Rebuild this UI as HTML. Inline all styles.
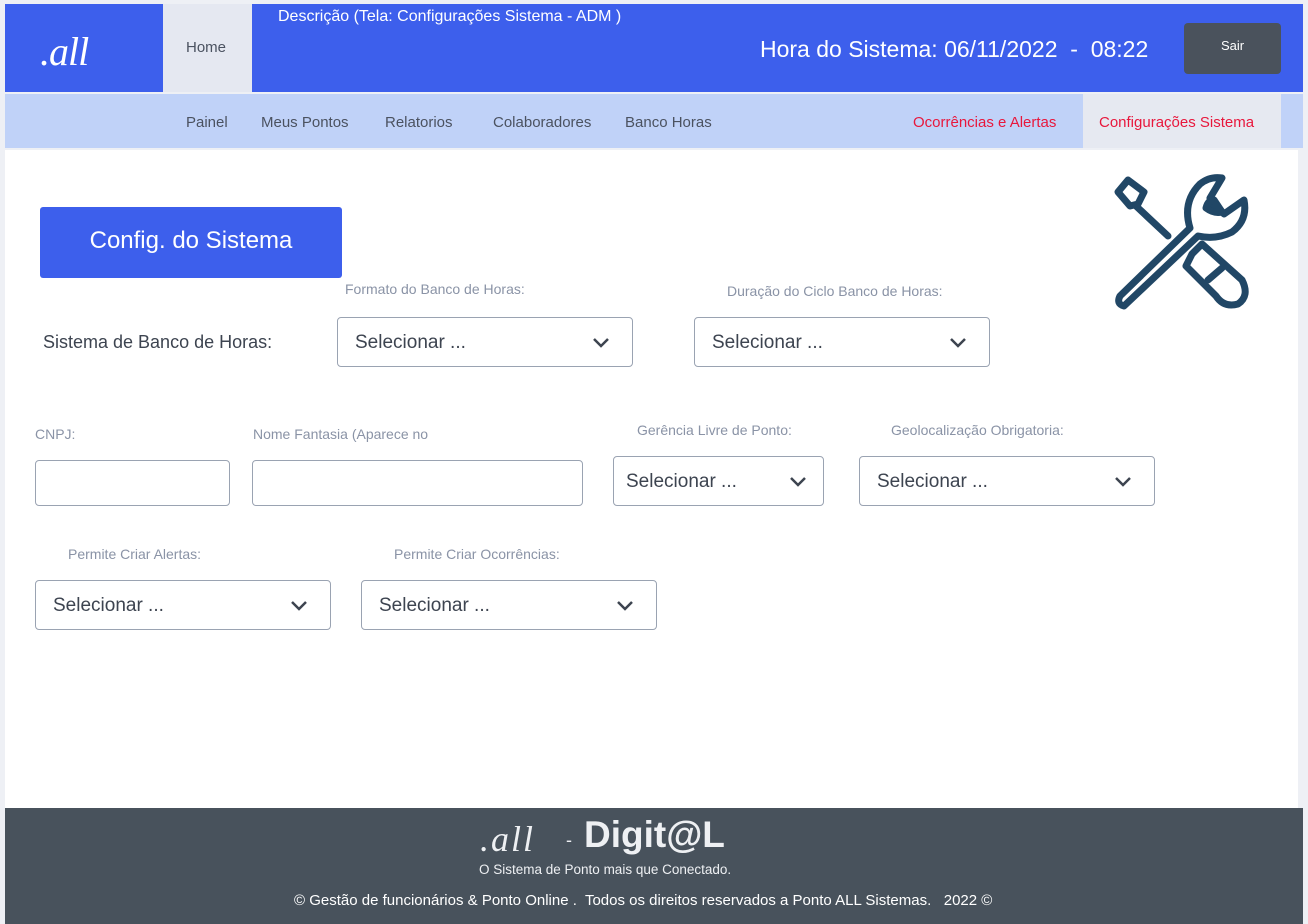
<!DOCTYPE html>
<html><head><meta charset="utf-8"><style>
*{margin:0;padding:0;box-sizing:border-box}
body{width:1308px;height:924px;background:#eef0f5;font-family:"Liberation Sans",sans-serif;position:relative;overflow:hidden}
.a{position:absolute}
.lbl{position:absolute;color:#8a93a6;font-size:14px;white-space:nowrap}
.sel{position:absolute;border:1px solid #9aa3b2;border-radius:4px;background:#fff;height:50px;font-size:19px;color:#3d4450}
.sel span{position:absolute;left:17px;top:14px}
.sel svg{position:absolute;right:22px;top:19px}
.inp{position:absolute;border:1px solid #9aa3b2;border-radius:4px;background:#fff;height:46px}
.nav{position:absolute;top:114px;font-size:15px;color:#4b5260;white-space:nowrap}
</style></head><body>
<div class="a" style="left:5px;top:4px;width:1298px;height:88px;background:#3d5fec"></div>
<div class="a" style="left:40px;top:28px;color:#fff;font-family:'Liberation Serif',serif;font-style:italic;font-size:40px;letter-spacing:-1px">.all</div>
<div class="a" style="left:163px;top:4px;width:89px;height:88px;background:#e5e8f1"></div>
<div class="a" style="left:186px;top:39px;font-size:15px;color:#4b5260">Home</div>
<div class="a" style="left:278px;top:8px;font-size:16px;color:#fff">Descrição (Tela: Configurações Sistema - ADM )</div>
<div class="a" style="left:760px;top:36px;font-size:23px;color:#fff;white-space:nowrap">Hora do Sistema: 06/11/2022&nbsp; - &nbsp;08:22</div>
<div class="a" style="left:1184px;top:23px;width:97px;height:51px;background:#4a525c;border-radius:4px;color:#fff;font-size:13px;text-align:center;line-height:46px">Sair</div>
<div class="a" style="left:5px;top:94px;width:1298px;height:54px;background:#c0d2f8"></div>
<div class="a" style="left:1083px;top:94px;width:198px;height:54px;background:#e6e9f1"></div>
<div class="nav" style="left:186px">Painel</div>
<div class="nav" style="left:261px">Meus Pontos</div>
<div class="nav" style="left:385px">Relatorios</div>
<div class="nav" style="left:493px">Colaboradores</div>
<div class="nav" style="left:625px">Banco Horas</div>
<div class="nav" style="left:913px;color:#e8173c">Ocorrências e Alertas</div>
<div class="nav" style="left:1099px;color:#e8173c">Configurações Sistema</div>
<div class="a" style="left:5px;top:150px;width:1293px;height:658px;background:#fff"></div>
<div class="a" style="left:40px;top:207px;width:302px;height:71px;background:#3d5fec;border-radius:3px;color:#fff;font-size:24px;text-align:center;line-height:68px">Config. do Sistema</div>
<svg class="a" style="left:1110px;top:172px" width="142" height="142" viewBox="0 0 142 142" fill="none" stroke="#214766" stroke-width="7" stroke-linejoin="round" stroke-linecap="round">
<path d="M8 20 L18 8 L34 20 L28 32 L20 34 Z"/>
<path d="M26 34 L58 64"/>
<path d="M80 56 L10 124 Q6 132 14 134 L88 64 Q106 68 122 60 Q138 48 134 28 L114 42 L100 26 L112 6 Q100 4 90 12 Q72 30 80 56 Z"/>
<path d="M96 36 Q98 28 104 28 L112 40 Q104 42 96 36 Z" fill="#214766"/>
<path d="M82 82 L92 72 L132 108 Q140 124 128 132 Q114 136 106 124 L76 94 Z"/>
<path d="M98 108 L112 96"/>
</svg>
<div class="lbl" style="left:345px;top:281px">Formato do Banco de Horas:</div>
<div class="lbl" style="left:727px;top:283px">Duração do Ciclo Banco de Horas:</div>
<div class="a" style="left:43px;top:332px;font-size:18px;color:#3d4450">Sistema de Banco de Horas:</div>
<div class="sel" style="left:337px;top:317px;width:296px"><span>Selecionar ...</span><svg width="18" height="12" viewBox="0 0 18 12"><path d="M2 2 L9 9 L16 2" fill="none" stroke="#3d4450" stroke-width="2.5"/></svg></div>
<div class="sel" style="left:694px;top:317px;width:296px"><span>Selecionar ...</span><svg width="18" height="12" viewBox="0 0 18 12"><path d="M2 2 L9 9 L16 2" fill="none" stroke="#3d4450" stroke-width="2.5"/></svg></div>
<div class="lbl" style="left:35px;top:426px">CNPJ:</div>
<div class="lbl" style="left:253px;top:426px">Nome Fantasia (Aparece no</div>
<div class="lbl" style="left:637px;top:422px">Gerência Livre de Ponto:</div>
<div class="lbl" style="left:891px;top:422px">Geolocalização Obrigatoria:</div>
<div class="inp" style="left:35px;top:460px;width:195px"></div>
<div class="inp" style="left:252px;top:460px;width:331px"></div>
<div class="sel" style="left:613px;top:456px;width:211px"><span style="left:12px">Selecionar ...</span><svg style="right:16px" width="18" height="12" viewBox="0 0 18 12"><path d="M2 2 L9 9 L16 2" fill="none" stroke="#3d4450" stroke-width="2.5"/></svg></div>
<div class="sel" style="left:859px;top:456px;width:296px"><span>Selecionar ...</span><svg width="18" height="12" viewBox="0 0 18 12"><path d="M2 2 L9 9 L16 2" fill="none" stroke="#3d4450" stroke-width="2.5"/></svg></div>
<div class="lbl" style="left:68px;top:546px">Permite Criar Alertas:</div>
<div class="lbl" style="left:394px;top:546px">Permite Criar Ocorrências:</div>
<div class="sel" style="left:35px;top:580px;width:296px"><span>Selecionar ...</span><svg width="18" height="12" viewBox="0 0 18 12"><path d="M2 2 L9 9 L16 2" fill="none" stroke="#3d4450" stroke-width="2.5"/></svg></div>
<div class="sel" style="left:361px;top:580px;width:296px"><span>Selecionar ...</span><svg width="18" height="12" viewBox="0 0 18 12"><path d="M2 2 L9 9 L16 2" fill="none" stroke="#3d4450" stroke-width="2.5"/></svg></div>
<div class="a" style="left:5px;top:808px;width:1298px;height:116px;background:#48525c"></div>
<div class="a" style="left:480px;top:818px;color:#eef0f3;font-family:'Liberation Serif',serif;font-style:italic;font-size:36px;letter-spacing:2px;white-space:nowrap">.all</div>
<div class="a" style="left:566px;top:830px;color:#eef0f3;font-size:18px">-</div>
<div class="a" style="left:584px;top:814px;color:#eef0f3;font-size:37px;font-weight:bold;white-space:nowrap">Digit@L</div>
<div class="a" style="left:479px;top:862px;color:#eef0f3;font-size:13.5px;white-space:nowrap">O Sistema de Ponto mais que Conectado.</div>
<div class="a" style="left:294px;top:892px;color:#fff;font-size:15px;white-space:nowrap">© Gestão de funcionários &amp; Ponto Online .&nbsp; Todos os direitos reservados a Ponto ALL Sistemas.&nbsp;&nbsp; 2022 ©</div>
</body></html>
